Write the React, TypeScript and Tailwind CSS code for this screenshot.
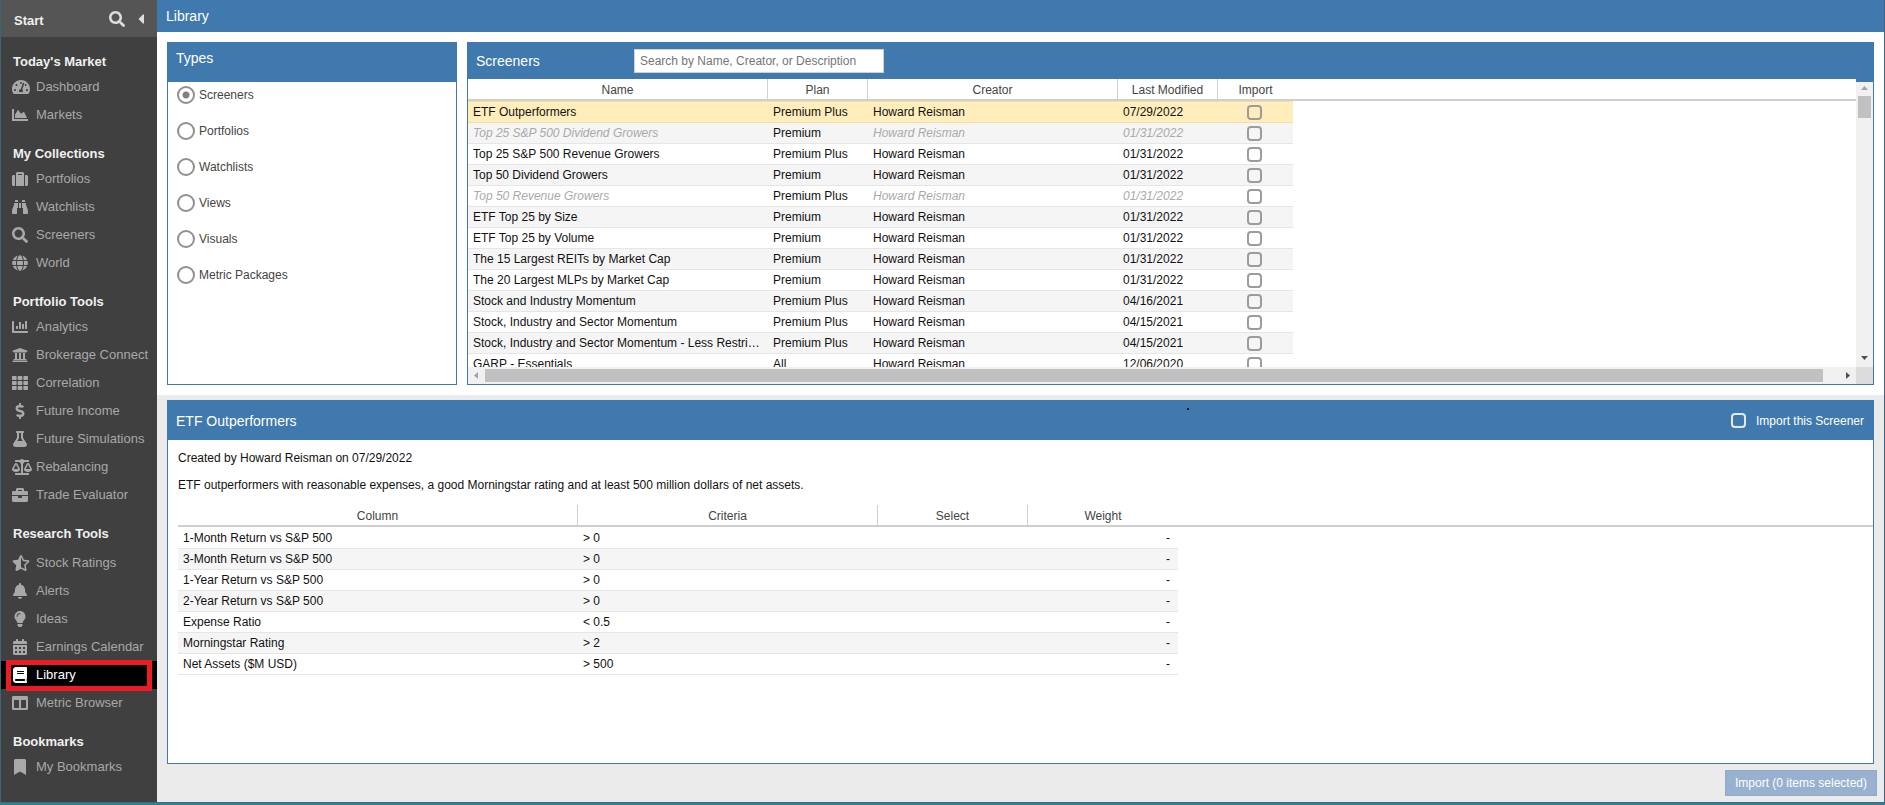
import { useState } from 'react';
import type { IconType } from 'react-icons';
import {
  FaBalanceScale,
  FaBell,
  FaBinoculars,
  FaBook,
  FaBookmark,
  FaBriefcase,
  FaCalendarAlt,
  FaCaretLeft,
  FaChartArea,
  FaChartBar,
  FaColumns,
  FaDollarSign,
  FaFlask,
  FaGlobe,
  FaLightbulb,
  FaSearch,
  FaStarHalfAlt,
  FaSuitcase,
  FaTachometerAlt,
  FaTh,
  FaUniversity,
} from 'react-icons/fa';

type NavItem = { label: string; icon: IconType; iconWidth?: string };
type NavSection = { title: string; items: NavItem[]; spaced?: boolean };

const navSections: NavSection[] = [
  {
    title: "Today's Market",
    items: [
      { label: 'Dashboard', icon: FaTachometerAlt, iconWidth: 'w-[18px]' },
      { label: 'Markets', icon: FaChartArea },
    ],
  },
  {
    title: 'My Collections',
    items: [
      { label: 'Portfolios', icon: FaSuitcase },
      { label: 'Watchlists', icon: FaBinoculars },
      { label: 'Screeners', icon: FaSearch },
      { label: 'World', icon: FaGlobe },
    ],
  },
  {
    title: 'Portfolio Tools',
    items: [
      { label: 'Analytics', icon: FaChartBar },
      { label: 'Brokerage Connect', icon: FaUniversity },
      { label: 'Correlation', icon: FaTh },
      { label: 'Future Income', icon: FaDollarSign },
      { label: 'Future Simulations', icon: FaFlask },
      { label: 'Rebalancing', icon: FaBalanceScale, iconWidth: 'w-5' },
      { label: 'Trade Evaluator', icon: FaBriefcase },
    ],
  },
  {
    title: 'Research Tools',
    spaced: true,
    items: [
      { label: 'Stock Ratings', icon: FaStarHalfAlt, iconWidth: 'w-[18px]' },
      { label: 'Alerts', icon: FaBell },
      { label: 'Ideas', icon: FaLightbulb },
      { label: 'Earnings Calendar', icon: FaCalendarAlt },
      { label: 'Library', icon: FaBook },
      { label: 'Metric Browser', icon: FaColumns },
    ],
  },
  {
    title: 'Bookmarks',
    items: [{ label: 'My Bookmarks', icon: FaBookmark }],
  },
];

const types = ['Screeners', 'Portfolios', 'Watchlists', 'Views', 'Visuals', 'Metric Packages'];

type Screener = { name: string; plan: string; modified: string; owned?: boolean };

const screeners: Screener[] = [
  { name: 'ETF Outperformers', plan: 'Premium Plus', modified: '07/29/2022' },
  { name: 'Top 25 S&P 500 Dividend Growers', plan: 'Premium', modified: '01/31/2022', owned: true },
  { name: 'Top 25 S&P 500 Revenue Growers', plan: 'Premium Plus', modified: '01/31/2022' },
  { name: 'Top 50 Dividend Growers', plan: 'Premium', modified: '01/31/2022' },
  { name: 'Top 50 Revenue Growers', plan: 'Premium Plus', modified: '01/31/2022', owned: true },
  { name: 'ETF Top 25 by Size', plan: 'Premium', modified: '01/31/2022' },
  { name: 'ETF Top 25 by Volume', plan: 'Premium', modified: '01/31/2022' },
  { name: 'The 15 Largest REITs by Market Cap', plan: 'Premium', modified: '01/31/2022' },
  { name: 'The 20 Largest MLPs by Market Cap', plan: 'Premium', modified: '01/31/2022' },
  { name: 'Stock and Industry Momentum', plan: 'Premium Plus', modified: '04/16/2021' },
  { name: 'Stock, Industry and Sector Momentum', plan: 'Premium Plus', modified: '04/15/2021' },
  {
    name: 'Stock, Industry and Sector Momentum - Less Restrictive',
    plan: 'Premium Plus',
    modified: '04/15/2021',
  },
  { name: 'GARP - Essentials', plan: 'All', modified: '12/06/2020' },
];

const criteria = [
  ['1-Month Return vs S&P 500', '> 0'],
  ['3-Month Return vs S&P 500', '> 0'],
  ['1-Year Return vs S&P 500', '> 0'],
  ['2-Year Return vs S&P 500', '> 0'],
  ['Expense Ratio', '< 0.5'],
  ['Morningstar Rating', '> 2'],
  ['Net Assets ($M USD)', '> 500'],
];

const thClass = 'h-[22px] border-b-2 border-[#cfcfcf] p-0 font-normal leading-[22px] text-[#444]';
const tdClass = 'h-[21px] truncate border-b px-[5px] py-0 leading-5';

const Sidebar: React.FC = () => {
  return (
    <aside className="w-[157px] shrink-0 border-l border-[#3c6579] bg-[#404040] text-[13px]">
      <div className="flex h-[37px] items-center bg-[#555] pl-[13px] pr-3 text-[#ddd]">
        <span className="grow pt-1 font-bold text-[#f0f0f0]">Start</span>
        <button type="button" aria-label="Search">
          <FaSearch className="h-4 w-4" />
        </button>
        <button type="button" aria-label="Collapse menu" className="ml-3">
          <FaCaretLeft className="h-4 w-2" />
        </button>
      </div>
      <nav>
        {navSections.map((section) => (
          <section key={section.title} className="pt-3">
            <h2 className="h-6 pl-3 font-bold leading-[26px] text-[#f0f0f0]">{section.title}</h2>
            <ul className={section.spaced ? 'pt-1' : ''}>
              {section.items.map(({ label, icon: Icon, iconWidth = 'w-4' }) => {
                const active = label === 'Library';
                return (
                  <li key={label} className={active ? 'relative bg-black text-white' : 'text-[#a8a8a8]'}>
                    <a href="#" className="flex h-7 items-center whitespace-nowrap pl-[11px] leading-7">
                      <span className="w-6 shrink-0">
                        <Icon className={`h-4 ${iconWidth}`} />
                      </span>
                      {label}
                    </a>
                    {active && (
                      <span className="pointer-events-none absolute -bottom-0.5 -top-px left-[5px] right-[5px] border-[5px] border-[#ed1c24]" />
                    )}
                  </li>
                );
              })}
            </ul>
          </section>
        ))}
      </nav>
    </aside>
  );
};

const TypesPanel: React.FC = () => {
  return (
    <section className="w-[290px] shrink-0 border border-[#4079ad] bg-white">
      <h2 className="h-[39px] bg-[#4079ad] px-2 pt-[5px] text-sm text-white">Types</h2>
      <div className="flex flex-col gap-[18px] pl-[9px] pt-1 text-xs text-[#444]">
        {types.map((type, i) => (
          <label key={type} className="flex h-[18px] items-center gap-1">
            <input
              type="radio"
              name="type"
              defaultChecked={i === 0}
              className="h-[18px] w-[18px] appearance-none rounded-full border-2 border-[#909090] bg-white bg-[radial-gradient(circle,#808080_3px,transparent_4px)] not-checked:bg-none"
            />
            {type}
          </label>
        ))}
      </div>
    </section>
  );
};

const ScreenersTable: React.FC = () => {
  return (
    <table className="w-full table-fixed border-separate border-spacing-0 text-xs">
      <colgroup>
        <col className="w-[300px]" />
        <col className="w-[100px]" />
        <col className="w-[250px]" />
        <col className="w-[100px]" />
        <col className="w-[75px]" />
        <col />
      </colgroup>
      <thead>
        <tr>
          {['Name', 'Plan', 'Creator', 'Last Modified', 'Import'].map((title) => (
            <th key={title} className={thClass}>
              <div className={title === 'Import' ? 'h-5' : 'h-5 border-r border-[#cfcfcf]'}>{title}</div>
            </th>
          ))}
          <td className={thClass} />
        </tr>
      </thead>
      <tbody>
        {screeners.map((s, i) => {
          const row =
            i === 0
              ? 'bg-[#ffeebc] *:border-t *:border-[#f5dfa0]'
              : i % 2
                ? 'bg-[#f5f5f5] *:border-[#e6e6e6]'
                : 'bg-white *:border-[#e6e6e6]';
          const muted = s.owned ? 'italic text-[#aaa]' : 'text-[#111]';
          return (
            <tr key={s.name} className={row}>
              <td className={`${tdClass} ${muted}`}>{s.name}</td>
              <td className={`${tdClass} text-[#111]`}>{s.plan}</td>
              <td className={`${tdClass} ${muted}`}>Howard Reisman</td>
              <td className={`${tdClass} ${muted}`}>{s.modified}</td>
              <td className={`${tdClass} pr-[7px]!`}>
                <input
                  type="checkbox"
                  aria-label={`Import ${s.name}`}
                  className="mx-auto block h-[15px] w-[15px] appearance-none rounded-[4px] border-2 border-[#9c9c9c] bg-transparent checked:bg-[#4079ad]"
                />
              </td>
              <td className="border-0! bg-white" />
            </tr>
          );
        })}
      </tbody>
    </table>
  );
};

const ScreenersPanel: React.FC = () => {
  return (
    <section className="flex min-w-0 flex-1 flex-col border border-[#4079ad] bg-white">
      <div className="flex h-9 shrink-0 items-center bg-[#4079ad] px-2">
        <h2 className="w-[158px] text-sm text-white">Screeners</h2>
        <input
          type="text"
          aria-label="Search screeners"
          placeholder="Search by Name, Creator, or Description"
          className="h-6 w-[250px] border border-[#d0d0d0] bg-white px-[5px] text-xs text-[#111] outline-none placeholder:text-[#757575]"
        />
      </div>
      <div className="flex min-h-0 flex-1">
        <div className="flex min-w-0 flex-1 flex-col">
          <div className="min-h-0 flex-1 overflow-hidden">
            <ScreenersTable />
          </div>
          <div className="flex h-[17px] shrink-0 items-center bg-[#f1f1f1]">
            <svg className="h-[17px] w-[17px] shrink-0" viewBox="0 0 17 17">
              <path d="M10 5v7L6 8.500z" fill="#a3a3a3" />
            </svg>
            <div className="mr-4 h-[13px] flex-1 bg-[#c1c1c1]" />
            <svg className="h-[17px] w-[17px] shrink-0" viewBox="0 0 17 17">
              <path d="M7 5v7l4-3.500z" fill="#505050" />
            </svg>
          </div>
        </div>
        <div className="flex w-[17px] shrink-0 flex-col bg-[#4079ad] pt-[3px]">
          <div className="flex flex-1 flex-col items-center bg-[#f1f1f1]">
            <svg className="h-3.5 w-[17px]" viewBox="0 0 17 14">
              <path d="M5 8h7L8.500 4z" fill="#a3a3a3" />
            </svg>
            <div className="h-[22px] w-[13px] bg-[#c1c1c1]" />
            <svg className="mt-auto h-[17px] w-[17px]" viewBox="0 0 17 17">
              <path d="M5 6h7l-3.500 4z" fill="#505050" />
            </svg>
          </div>
          <div className="h-[17px] bg-[#dcdcdc]" />
        </div>
      </div>
    </section>
  );
};

const DetailPanel: React.FC = () => {
  return (
    <section className="flex-1 border border-[#4079ad] bg-white">
      <div className="relative flex h-[39px] items-center justify-between bg-[#4079ad] pl-2 pr-[9px] text-white">
        <h2 className="text-sm">ETF Outperformers</h2>
        <span className="absolute left-[60%] top-[7px] -ml-1 h-0.5 w-0.5 bg-[#111]" />
        <label className="flex items-center gap-2.5 text-xs">
          <input
            type="checkbox"
            className="h-[15px] w-[15px] appearance-none rounded-[4px] border-2 border-[#e2eaf2] checked:bg-white"
          />
          Import this Screener
        </label>
      </div>
      <div className="pl-2.5 text-xs text-[#111]">
        <p className="pt-2.5">Created by Howard Reisman on 07/29/2022</p>
        <p className="pt-[11px]">
          ETF outperformers with reasonable expenses, a good Morningstar rating and at least 500 million dollars of
          net assets.
        </p>
        <table className="mt-3 w-full table-fixed border-separate border-spacing-0">
          <colgroup>
            <col className="w-[400px]" />
            <col className="w-[300px]" />
            <col className="w-[150px]" />
            <col className="w-[150px]" />
            <col />
          </colgroup>
          <thead>
            <tr>
              {['Column', 'Criteria', 'Select', 'Weight'].map((title) => (
                <th key={title} className={thClass}>
                  <div className={title === 'Weight' ? 'h-5' : 'h-5 border-r border-[#cfcfcf]'}>{title}</div>
                </th>
              ))}
              <td className={thClass} />
            </tr>
          </thead>
          <tbody>
            {criteria.map(([column, rule], i) => (
              <tr
                key={column}
                className={
                  i % 2
                    ? 'bg-[#f5f5f5] *:border-[#e6e6e6]'
                    : 'bg-white *:border-[#e6e6e6] first:*:border-t first:*:border-t-white'
                }
              >
                <td className={tdClass}>{column}</td>
                <td className={tdClass}>{rule}</td>
                <td className={tdClass} />
                <td className={`${tdClass} pr-2! text-right`}>-</td>
                <td className="border-0! bg-white" />
              </tr>
            ))}
          </tbody>
        </table>
      </div>
    </section>
  );
};

const App: React.FC = () => {
  const [selected] = useState(0);

  return (
    <div className="flex min-h-screen flex-col bg-[#ebebeb] font-['Liberation_Sans',Arial,sans-serif]">
      <div className="flex flex-1">
        <Sidebar />
        <main className="flex min-w-0 flex-1 flex-col border-r border-[#3c6579]">
          <h1 className="h-8 bg-[#4079ad] pl-[9px] text-sm leading-8 text-white">Library</h1>
          <div className="flex h-[363px] gap-2.5 bg-white p-2.5">
            <TypesPanel />
            <ScreenersPanel />
          </div>
          <div className="flex flex-1 flex-col px-2.5 pt-[5px]">
            <DetailPanel />
          </div>
          <div className="flex justify-end px-[7px] py-1.5">
            <button
              type="button"
              disabled={selected === 0}
              className="h-[26px] w-[152px] border border-[#8eabca] bg-[#98b1ce] text-xs text-white"
            >
              Import ({selected} items selected)
            </button>
          </div>
        </main>
      </div>
      <div className="h-[3px] border-t border-[#446a7a] bg-[#2f7e9c]" />
    </div>
  );
};

export default App;
